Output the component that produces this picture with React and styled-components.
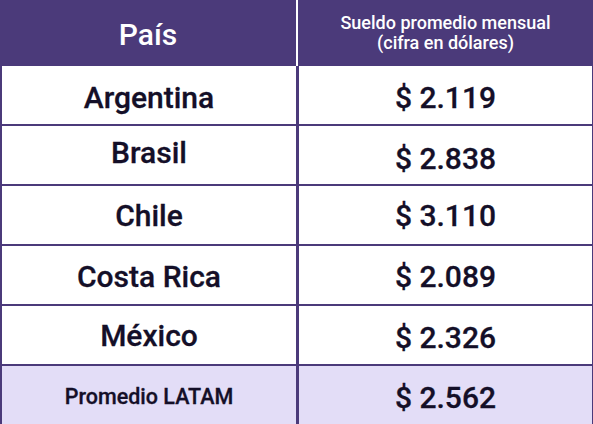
import React from "react";
import styled, { createGlobalStyle } from "styled-components";

const Global = createGlobalStyle`
  html, body { margin: 0; padding: 0; background: #ffffff; }
  body { font-family: Roboto, "Noto Sans", "Liberation Sans", sans-serif; }
`;

const PURPLE = "#4b3a7a";
const INK = "#140f28";

const Table = styled.div`
  width: 593px;
  height: 424px;
  display: flex;
  flex-direction: column;
  box-sizing: border-box;
  overflow: hidden;
`;

const HeaderRow = styled.div`
  display: flex;
  height: 66px;
  flex: none;
  background: ${PURPLE};
  color: #ffffff;
`;

const HeaderCell = styled.div`
  box-sizing: border-box;
  display: flex;
  align-items: center;
  justify-content: center;
  text-align: center;
  font-weight: 500;
  ${(p) =>
    p.$first
      ? `width: 298px; border-right: 2px solid #ffffff; font-size: 30px; padding-top: 2px;`
      : `flex: 1; font-size: 18px; line-height: 20px; padding-top: 0px;`}
`;

const Row = styled.div`
  display: flex;
  height: 60px;
  flex: none;
  box-sizing: border-box;
  border-bottom: 2px solid ${PURPLE};
  background: ${(p) => (p.$total ? "#e3ddf7" : "#ffffff")};
`;

const Cell = styled.div`
  box-sizing: border-box;
  display: flex;
  align-items: center;
  justify-content: center;
  color: ${INK};
  font-weight: 500;
  font-size: ${(p) => (p.$small ? "21.5px" : "30px")};
  -webkit-text-stroke: 0.3px ${INK};
  padding-top: ${(p) => (p.$dy > 0 ? p.$dy * 2 : 0)}px;
  padding-bottom: ${(p) => (p.$dy < 0 ? -p.$dy * 2 : 0)}px;
  ${(p) =>
    p.$first
      ? `width: 299px; border-left: 2px solid ${PURPLE}; border-right: 3px solid ${PURPLE};`
      : `flex: 1; border-right: 1px solid ${PURPLE};`}
`;

const rows = [
  { country: "Argentina", value: "$ 2.119", dl: 2, dr: 2 },
  { country: "Brasil", value: "$ 2.838", dl: -3, dr: 3 },
  { country: "Chile", value: "$ 3.110", dl: 0, dr: 0 },
  { country: "Costa Rica", value: "$ 2.089", dl: 1, dr: 1 },
  { country: "México", value: "$ 2.326", dl: 0, dr: 2 },
  { country: "Promedio LATAM", value: "$ 2.562", dl: 1, dr: 2, total: true },
];

export default function App() {
  return (
    <>
      <Global />
      <Table>
        <HeaderRow>
          <HeaderCell $first>País</HeaderCell>
          <HeaderCell>
            Sueldo promedio mensual
            <br />
            (cifra en dólares)
          </HeaderCell>
        </HeaderRow>
        {rows.map((r) => (
          <Row key={r.country} $total={r.total}>
            <Cell $first $dy={r.dl} $small={r.total}>
              {r.country}
            </Cell>
            <Cell $dy={r.dr}>{r.value}</Cell>
          </Row>
        ))}
      </Table>
    </>
  );
}
